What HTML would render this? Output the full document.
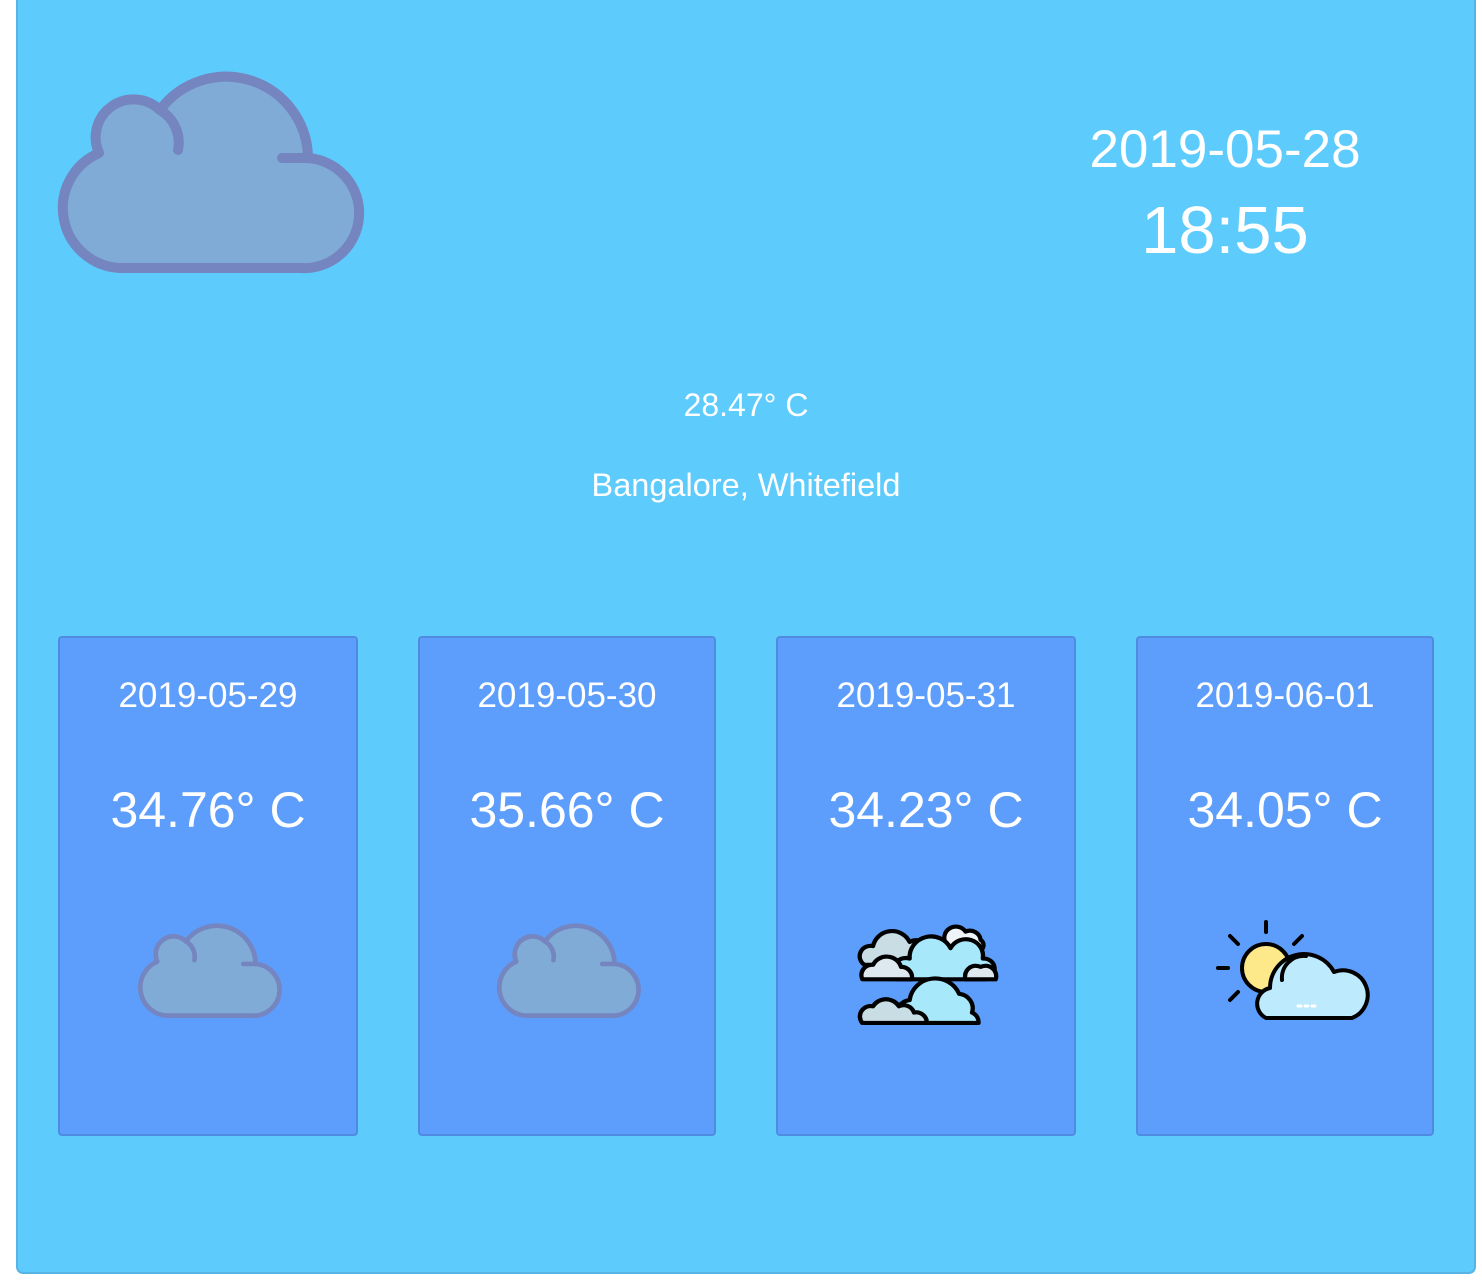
<!DOCTYPE html>
<html><head><meta charset="utf-8"><style>
html,body{margin:0;padding:0;background:#fff;width:1482px;height:1282px;overflow:hidden}
body{font-family:"Liberation Sans",sans-serif;color:#fff;position:relative}
.box{position:absolute;left:16px;top:-10px;width:1460px;height:1284px;background:#5ecbfd;border:2px solid #56b4e4;border-radius:7px;box-sizing:border-box}
.t{position:absolute;text-align:center;white-space:nowrap}
.card{position:absolute;top:636px;width:300px;height:500px;background:#5d9dfc;border:2px solid #4f8ce0;border-radius:4px;box-sizing:border-box}
.card .d{position:absolute;top:38px;left:0;right:0;text-align:center;font-size:35px}
.card .p{position:absolute;top:143px;left:0;right:0;text-align:center;font-size:50px}
.card svg{position:absolute;overflow:visible}
</style></head><body>
<div class="box"></div>
<svg width="0" height="0" style="position:absolute"><defs>
<g id="cl">
<path d="M62 195 H242 A55 55 0 0 0 250 85 A82 82 0 0 0 102 37 A38 38 0 0 0 41 80 A60 60 0 0 0 62 195 Z" fill="#80abd6" stroke="#7585bf" stroke-width="10" stroke-linejoin="round"/>
<path d="M102 37 A38 38 0 0 1 120 77 M224 85 H250" fill="none" stroke="#7585bf" stroke-width="10" stroke-linecap="round"/>
</g></defs></svg>
<svg style="position:absolute;left:58px;top:73px;overflow:visible" width="300" height="200" viewBox="0 0 300 200"><use href="#cl"/></svg>
<div class="t" style="left:1025px;width:400px;top:119px;font-size:53px">2019-05-28</div>
<div class="t" style="left:1025px;width:400px;top:192px;font-size:67px">18:55</div>
<div class="t" style="left:546px;width:400px;top:387px;font-size:32px">28.47° C</div>
<div class="t" style="left:446px;width:600px;top:467px;font-size:32.5px">Bangalore, Whitefield</div>

<div class="card" style="left:58px"><div class="d">2019-05-29</div><div class="p">34.76° C</div>
<svg style="left:78px;top:285px" width="141" height="96" viewBox="0 0 300 200"><use href="#cl"/></svg></div>
<div class="card" style="left:418px;width:298px"><div class="d">2019-05-30</div><div class="p">35.66° C</div>
<svg style="left:77px;top:285px" width="141" height="96" viewBox="0 0 300 200"><use href="#cl"/></svg></div>
<div class="card" style="left:776px"><div class="d">2019-05-31</div><div class="p">34.23° C</div>
<svg style="left:80px;top:277px" width="142" height="110" viewBox="0 0 132 106" preserveAspectRatio="none" stroke="#000" stroke-width="4" stroke-linejoin="round">
<path d="M6 48 a10 10 0 0 1 8-18 a18 18 0 0 1 34-4 a12 12 0 0 1 18 12 a10 10 0 0 1 -2 10 Z" fill="#c8dde4"/>
<path d="M82 28 a10 10 0 0 1 18-12 a10 10 0 0 1 14 8 a6 6 0 0 1 0 10 H80 Z" fill="#eef4f7"/>
<path d="M36 62 a12 12 0 0 1 12-20 a20 20 0 0 1 38-10 a16 16 0 0 1 30 10 a10 10 0 0 1 2 20 Z" fill="#a8e8fb"/>
<path d="M4 62 a10 10 0 0 1 10-14 a14 14 0 0 1 26 2 a10 10 0 0 1 10 12 Z" fill="#dde9ee"/>
<path d="M100 62 a10 10 0 0 1 14-12 a10 10 0 0 1 14 12 Z" fill="#dde9ee"/>
<path d="M4 104 a10 10 0 0 1 10-16 a14 14 0 0 1 24 0 a14 14 0 0 1 10 -6 a24 24 0 0 1 46 -6 a14 14 0 0 1 12 18 a10 10 0 0 1 6 10 Z" fill="#a8e8fb"/>
<path d="M4 104 a10 10 0 0 1 10-16 a14 14 0 0 1 24 0 a10 10 0 0 1 14 6 a10 10 0 0 1 12 10 Z" fill="#c8dde4"/>
</svg></div>
<div class="card" style="left:1136px;width:298px"><div class="d">2019-06-01</div><div class="p">34.05° C</div>
<svg style="left:76px;top:280px" width="145" height="110" viewBox="0 0 145 110" stroke="#000" stroke-width="4" stroke-linecap="round">
<path d="M52 4 V14 M16 18 L24 26 M88 18 L80 26 M4 50 H14 M16 82 L24 74" />
<circle cx="52" cy="50" r="24" fill="#fde98a"/>
<path d="M52 100 a16 16 0 0 1 4-30 a34 34 0 0 1 64-16 a18 18 0 0 1 18 46 Z" fill="#bdeafc" stroke-linejoin="round"/>
<path d="M68 62 a22 22 0 0 1 24-24" fill="none"/>
<path d="M84 88 h3 M91 88 h3 M98 88 h3" stroke="#fff" stroke-width="3"/>
</svg></div>
</body></html>
